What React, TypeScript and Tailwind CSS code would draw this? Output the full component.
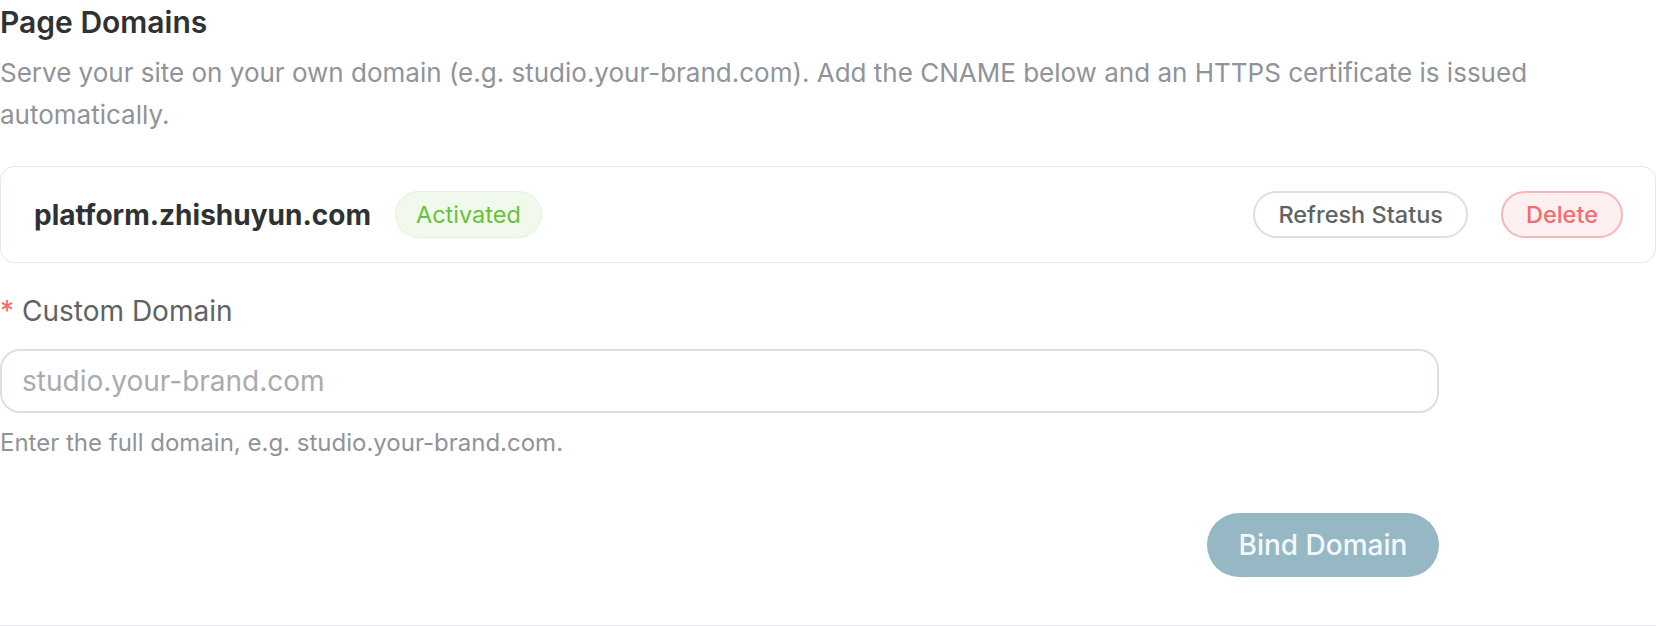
import { useState } from "react";

type DomainItem = { host: string; status: "active" | "pending" };

const domains: DomainItem[] = [{ host: "platform.zhishuyun.com", status: "active" }];

export default function App() {
  const [value, setValue] = useState("");

  return (
    <main className="h-[626px] w-full border-b border-[#e4e7ed] bg-white font-['Inter',sans-serif] text-[#303133]">
      <header>
        <h1 className="pt-[2px] text-[30px] font-semibold leading-[40px]">Page Domains</h1>
        <p className="mt-[10px] max-w-[1600px] text-[26px] leading-[42px] text-[#909399]">
          Serve your site on your own domain (e.g. studio.your-brand.com). Add the CNAME below and an HTTPS
          certificate is issued automatically.
        </p>
      </header>

      <div className="mt-[30px] space-y-3">
        {domains.map((d) => (
          <div
            key={d.host}
            className="flex h-[97px] items-center rounded-[14px] border border-[#e4e7ed] pl-[33px] pr-[32px]"
          >
            <span className="text-[28px] font-bold">{d.host}</span>
            <span className="ml-[24px] flex h-[47px] items-center rounded-full border border-[#e1f3d8] bg-[#f0f9eb] px-[20px] text-[23.5px] text-[#67c23a]">
              Activated
            </span>
            <div className="ml-auto flex items-center gap-[33px]">
              <button
                type="button"
                className="h-[47px] rounded-full border-2 border-[#dcdfe6] bg-white px-[23px] text-[23.5px] font-medium text-[#606266]"
              >
                Refresh Status
              </button>
              <button
                type="button"
                className="h-[47px] rounded-full border-2 border-[#fab6b6] bg-[#fef0f0] px-[23px] text-[23.5px] font-medium text-[#f56c6c]"
              >
                Delete
              </button>
            </div>
          </div>
        ))}
      </div>

      <div className="w-[1439px]">
        <label className="mt-[30px] block text-[28px] leading-[36px] text-[#606266]">
          <span className="mr-[8px] text-[#f56c6c]">*</span>
          Custom Domain
        </label>
        <input
          className="mt-[20px] block h-[64px] w-full rounded-[20px] border-2 border-[#dcdfe6] px-[20px] text-[28px] text-[#606266] outline-none placeholder:text-[#a8abb2]"
          placeholder="studio.your-brand.com"
          value={value}
          onChange={(e) => setValue(e.target.value)}
        />
        <p className="mt-[15px] text-[24px] leading-[30px] text-[#909399]">
          Enter the full domain, e.g. studio.your-brand.com.
        </p>
        <div className="mt-[55px] flex justify-end">
          <button
            type="button"
            disabled={value.trim().length === 0}
            className="h-[64px] w-[232px] rounded-full bg-[#95b8c4] text-[28px] font-medium text-[#f4f8fa]"
          >
            Bind Domain
          </button>
        </div>
      </div>
    </main>
  );
}
